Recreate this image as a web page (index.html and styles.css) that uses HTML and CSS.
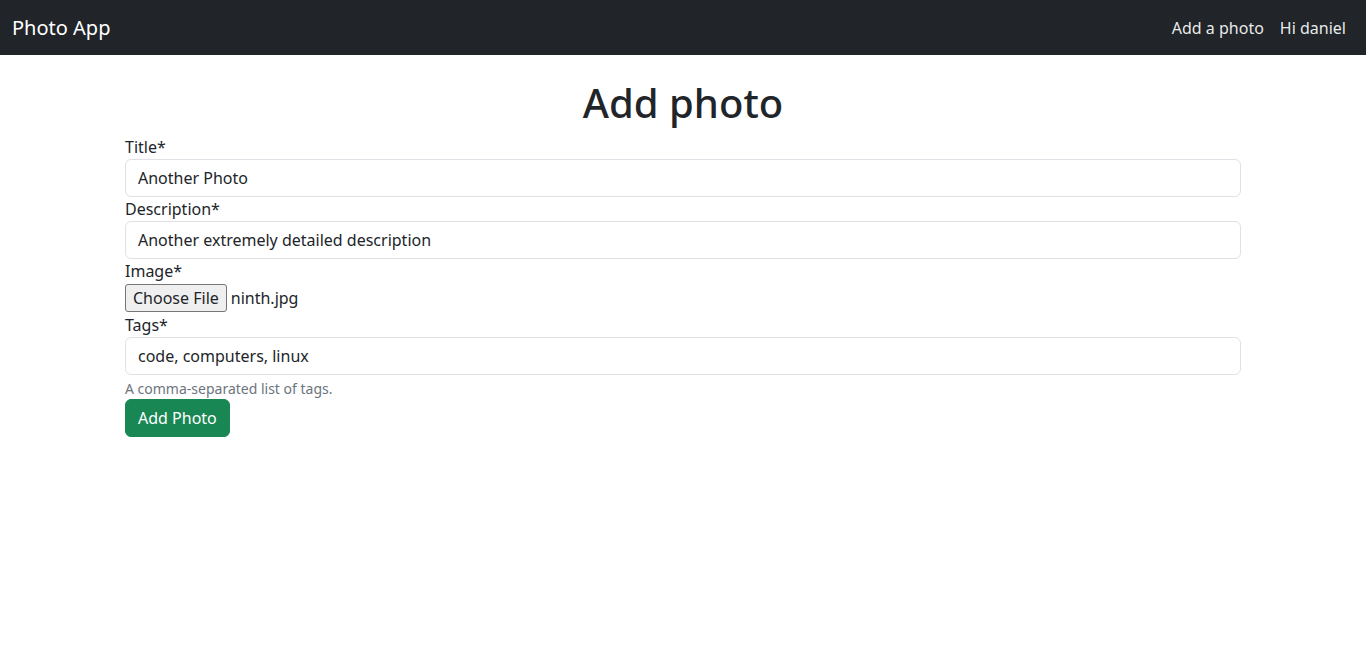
FILE: index.html
```html
<!DOCTYPE html>
<html lang="en">
<head>
<meta charset="utf-8">
<title>Photo App</title>
<link rel="stylesheet" href="styles.css">
</head>
<body>
<nav class="navbar">
  <a class="brand" href="#">Photo App</a>
  <div class="nav-links">
    <a class="nav-link" href="#">Add a photo</a>
    <a class="nav-link" href="#">Hi daniel</a>
  </div>
</nav>
<main class="container">
  <h1 class="title">Add photo</h1>
  <form class="form">
    <label class="label" for="title">Title*</label>
    <input class="input" id="title" type="text" value="Another Photo">
    <label class="label" for="desc">Description*</label>
    <input class="input" id="desc" type="text" value="Another extremely detailed description">
    <label class="label">Image*</label>
    <div class="file-row">
      <button type="button" class="file-btn">Choose File</button>
      <span class="file-name">ninth.jpg</span>
    </div>
    <label class="label" for="tags">Tags*</label>
    <input class="input" id="tags" type="text" value="code, computers, linux">
    <div class="form-text">A comma-separated list of tags.</div>
    <div><button type="button" class="btn-success">Add Photo</button></div>
  </form>
</main>
</body>
</html>
```
FILE: styles.css
```css
* { box-sizing: border-box; }
html, body { margin: 0; padding: 0; }
body {
  font-family: "Noto Sans", "Liberation Sans", sans-serif;
  font-size: 16px;
  line-height: 1.5;
  color: #212529;
  background: #fff;
}
.navbar {
  height: 55px;
  background: #212529;
  display: flex;
  align-items: center;
  justify-content: space-between;
  padding: 0 12px;
}
.brand {
  color: #fff;
  font-size: 20px;
  line-height: 30px;
  text-decoration: none;
}
.nav-links { display: flex; }
.nav-link {
  color: rgba(255,255,255,0.92);
  text-decoration: none;
  padding: 8px 8px;
  line-height: 24px;
}
.container {
  max-width: 1140px;
  margin: 24px auto 0;
  padding: 0 12px;
}
.title {
  font-size: 40px;
  font-weight: 500;
  line-height: 1.2;
  text-align: center;
  margin: 0 0 8px;
}
.form { display: flex; flex-direction: column; }
.label { display: block; line-height: 24px; }
.input {
  display: block;
  width: 100%;
  height: 38px;
  padding: 6px 12px;
  font: inherit;
  color: #212529;
  border: 1px solid #dee2e6;
  border-radius: 6px;
  background: #fff;
}
.file-row { display: flex; align-items: center; height: 30px; }
.file-btn {
  font: inherit;
  line-height: 24px;
  padding: 1px 7px;
  background: #efefef;
  border: 1px solid #767676;
  border-radius: 3px;
  color: #212529;
}
.file-name { margin-left: 4px; }
.form-text {
  margin-top: 3px;
  font-size: 14px;
  line-height: 21px;
  color: #6c757d;
}
.btn-success {
  font: inherit;
  line-height: 24px;
  padding: 6px 12px;
  background: #198754;
  color: #fff;
  border: 1px solid #198754;
  border-radius: 6px;
}
```
